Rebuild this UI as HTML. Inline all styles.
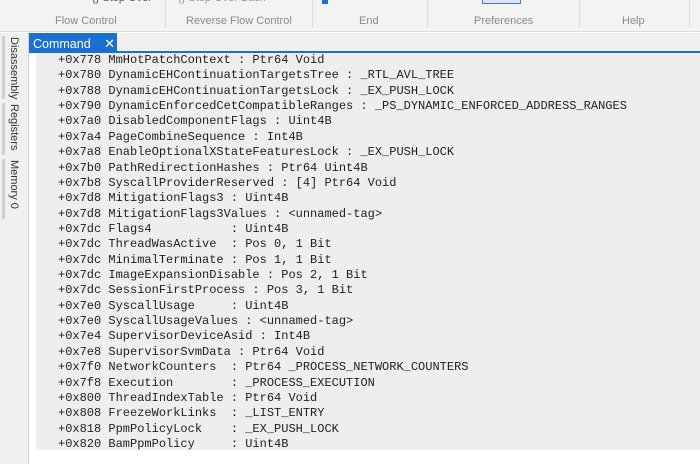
<!DOCTYPE html>
<html><head><meta charset="utf-8"><style>
*{margin:0;padding:0;box-sizing:border-box}
body{width:700px;height:464px;overflow:hidden;background:#fff;font-family:"Liberation Sans",sans-serif;position:relative}
.rib{position:absolute;left:0;top:0;width:700px;height:32px;background:#f3f3f3;border-bottom:1px solid #dcdcdc}
.lbl{position:absolute;top:15px;font-size:11px;color:#8a8a8a}
.sep{position:absolute;top:0;width:1px;height:28px;background:#dcdcdc}
.top{position:absolute;top:-8px;font-size:11px;color:#555}
.side{position:absolute;left:0;top:33px;width:29px;height:431px;background:#f0f0f0;border-right:1px solid #d4d4d4}
.vt{position:absolute;left:8px;font-size:11px;color:#333;writing-mode:vertical-rl}
.bar{position:absolute;left:2px;width:3px;background:#cfcfcf}
.strip{position:absolute;left:30px;top:33px;width:670px;height:20px;background:#f0f0f0;border-bottom:2px solid #1a6fd0}
.tab{position:absolute;left:29px;top:33px;width:88px;height:20px;background:#1a6fd0;color:#fff;font-size:12.5px;padding:3px 0 0 4px}
.content{position:absolute;left:36px;top:53px;width:664px;height:397px;background:#eeeeee;overflow:hidden}
pre{position:absolute;left:22px;top:0px;font-family:"Liberation Mono",monospace;font-size:12px;line-height:15.36px;color:#1e1e1e}
</style></head><body>
<div class="rib">
<div class="top" style="left:92px">{} Step Over</div>
<div class="top" style="left:178px;color:#999">{} Step Over Back</div>
<div class="sep" style="left:165px"></div>
<div class="sep" style="left:312px"></div>
<div class="sep" style="left:427px"></div>
<div class="sep" style="left:579px"></div>
<div class="sep" style="left:689px"></div>
<div class="lbl" style="left:55px">Flow Control</div>
<div class="lbl" style="left:186px">Reverse Flow Control</div>
<div class="lbl" style="left:359px">End</div>
<div class="lbl" style="left:474px">Preferences</div>
<div class="lbl" style="left:622px">Help</div>
<div style="position:absolute;left:322px;top:0;width:6px;height:4px;background:#1a6fd0"></div>
<div style="position:absolute;left:482px;top:0;width:39px;height:4px;border:1px solid #4a78c0;border-top:none;background:#dce6f5"></div>
</div>
<div class="side">
<div class="bar" style="top:3px;height:63px"></div>
<div class="vt" style="top:4px">Disassembly</div>
<div class="bar" style="top:70px;height:52px"></div>
<div class="vt" style="top:71px">Registers</div>
<div class="bar" style="top:126px;height:60px"></div>
<div class="vt" style="top:127px">Memory 0</div>
</div>
<div class="strip"></div>
<div class="tab">Command <span style="margin-left:10px;font-size:13px">✕</span></div>
<div class="content"><pre>+0x778 MmHotPatchContext : Ptr64 Void
+0x780 DynamicEHContinuationTargetsTree : _RTL_AVL_TREE
+0x788 DynamicEHContinuationTargetsLock : _EX_PUSH_LOCK
+0x790 DynamicEnforcedCetCompatibleRanges : _PS_DYNAMIC_ENFORCED_ADDRESS_RANGES
+0x7a0 DisabledComponentFlags : Uint4B
+0x7a4 PageCombineSequence : Int4B
+0x7a8 EnableOptionalXStateFeaturesLock : _EX_PUSH_LOCK
+0x7b0 PathRedirectionHashes : Ptr64 Uint4B
+0x7b8 SyscallProviderReserved : [4] Ptr64 Void
+0x7d8 MitigationFlags3 : Uint4B
+0x7d8 MitigationFlags3Values : &lt;unnamed-tag&gt;
+0x7dc Flags4           : Uint4B
+0x7dc ThreadWasActive  : Pos 0, 1 Bit
+0x7dc MinimalTerminate : Pos 1, 1 Bit
+0x7dc ImageExpansionDisable : Pos 2, 1 Bit
+0x7dc SessionFirstProcess : Pos 3, 1 Bit
+0x7e0 SyscallUsage     : Uint4B
+0x7e0 SyscallUsageValues : &lt;unnamed-tag&gt;
+0x7e4 SupervisorDeviceAsid : Int4B
+0x7e8 SupervisorSvmData : Ptr64 Void
+0x7f0 NetworkCounters  : Ptr64 _PROCESS_NETWORK_COUNTERS
+0x7f8 Execution        : _PROCESS_EXECUTION
+0x800 ThreadIndexTable : Ptr64 Void
+0x808 FreezeWorkLinks  : _LIST_ENTRY
+0x818 PpmPolicyLock    : _EX_PUSH_LOCK
+0x820 BamPpmPolicy     : Uint4B</pre></div>
</body></html>
